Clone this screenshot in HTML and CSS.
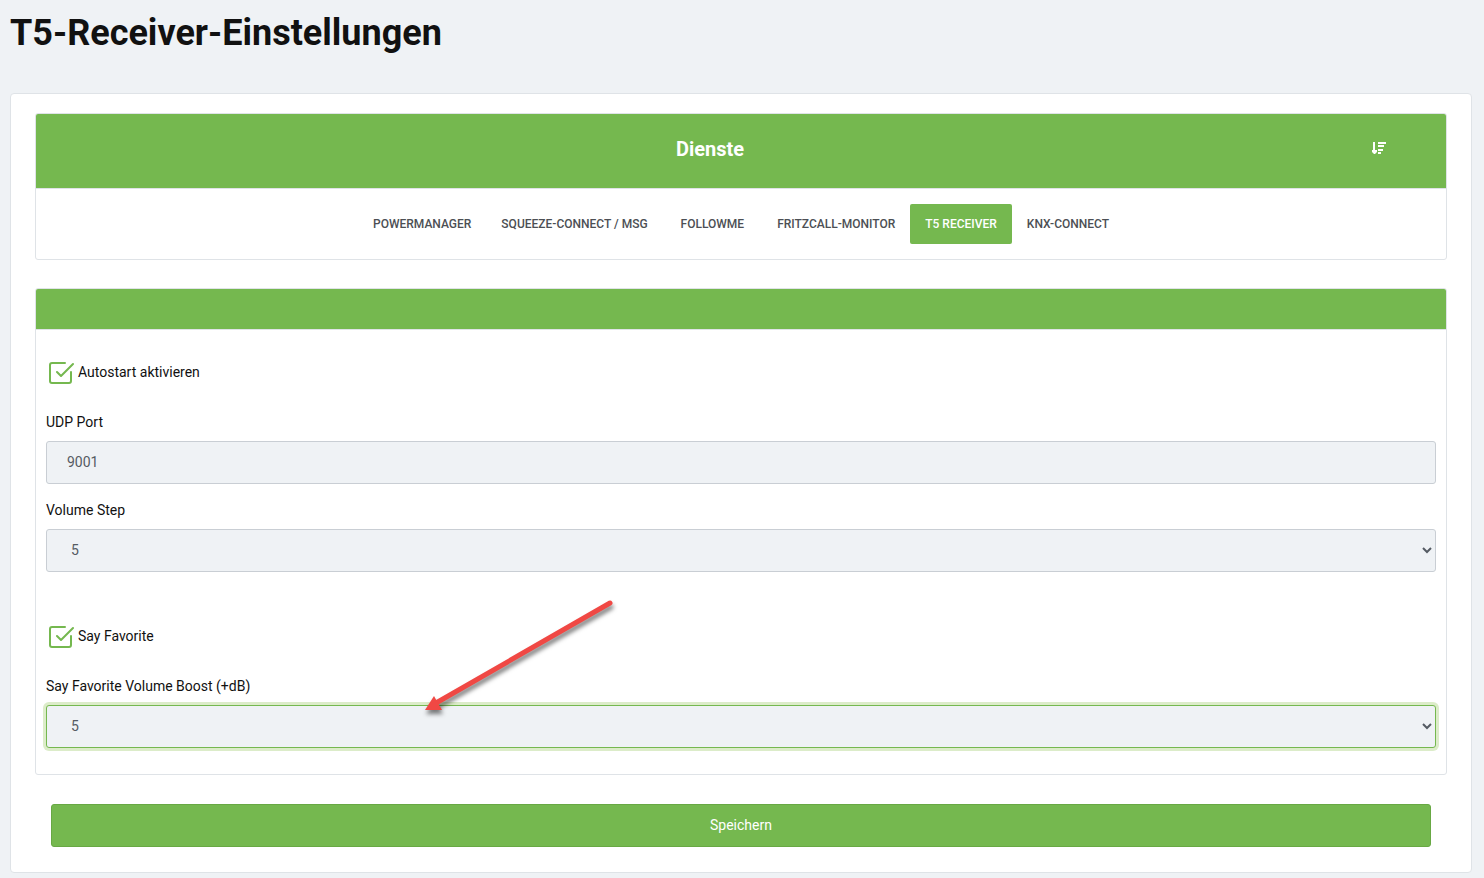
FILE: index.html
```html
<!DOCTYPE html>
<html lang="de">
<head>
  <meta charset="UTF-8" />
  <meta name="viewport" content="width=device-width, initial-scale=1.0" />
  <title>T5-Receiver-Einstellungen</title>
  <link rel="stylesheet" href="styles.css">
</head>
<body>
  <h1>T5-Receiver-Einstellungen</h1>

  <form class="panel" id="receiverForm">
    <section class="card">
      <div class="card-header services-header">
        <h2>Dienste</h2>
        <button type="button" class="sort-btn" aria-label="Sortieren">
          <svg width="16" height="14" viewBox="0 0 16 14" fill="currentColor">
            <path d="M2 1h2v8h2v2l-2 2H3L1 11V9h1z" />
            <path d="M7 1h8v2H7zM7 4h6v2H7zM7 8h5v2H7zM7 11h3v2H7z" />
          </svg>
        </button>
      </div>
      <nav class="tabs">
        <a href="#powermanager">Powermanager</a>
        <a href="#squeeze">Squeeze-Connect / MSG</a>
        <a href="#followme" class="spaced">FollowMe</a>
        <a href="#fritzcall" class="spaced">FritzCall-Monitor</a>
        <a href="#t5" class="active">T5 Receiver</a>
        <a href="#knx">KNX-Connect</a>
      </nav>
    </section>

    <section class="card">
      <div class="card-header"></div>
      <div class="card-body">
        <label class="check-row">
          <span class="check">
            <input type="checkbox" name="autostart" checked />
            <svg width="26" height="26" viewBox="0 0 26 26">
              <path d="M17 3H4a2 2 0 0 0-2 2v16a2 2 0 0 0 2 2h17a2 2 0 0 0 2-2v-9" />
              <path d="M9 12l4 4L25 4" />
            </svg>
          </span>
          Autostart aktivieren
        </label>
        <div class="form-group">
          <label for="udpPort">UDP Port</label>
          <input type="text" id="udpPort" name="udpPort" value="9001" />
        </div>
        <div class="form-group">
          <label for="volumeStep">Volume Step</label>
          <select id="volumeStep" name="volumeStep">
            <option>5</option>
          </select>
        </div>
        <label class="check-row second">
          <span class="check">
            <input type="checkbox" name="sayFavorite" checked />
            <svg width="26" height="26" viewBox="0 0 26 26">
              <path d="M17 3H4a2 2 0 0 0-2 2v16a2 2 0 0 0 2 2h17a2 2 0 0 0 2-2v-9" />
              <path d="M9 12l4 4L25 4" />
            </svg>
          </span>
          Say Favorite
        </label>
        <div class="form-group">
          <label for="volumeBoost">Say Favorite Volume Boost (+dB)</label>
          <select id="volumeBoost" name="volumeBoost" class="focused">
            <option>5</option>
          </select>
          <svg class="arrow" width="200" height="130" viewBox="0 0 200 130">
            <path d="M190 13L16 113" stroke="#f04844" stroke-width="5" stroke-linecap="round" />
            <path d="M5 120L14 106L22 120z" fill="#f04844" />
          </svg>
        </div>
      </div>
    </section>

    <button type="submit" class="save-btn">Speichern</button>
  </form>
</body>
</html>
```
FILE: styles.css
```css
* {
  box-sizing: border-box;
}

body {
  font-family: Roboto, sans-serif;
  font-size: 14px;
  line-height: 20px;
  margin: 0;
  padding: 10px 12px 5px 10px;
  background-color: #eff2f5;
  color: #111;
}

h1 {
  margin: 0 0 37px;
  font-size: 36px;
  line-height: 46px;
  font-weight: 700;
}

.panel {
  padding: 19px 24px 25px;
  background: white;
  border: 1px solid #dfe3e7;
  border-radius: 4px;
}

.card {
  margin-bottom: 28px;
  border: 1px solid #dfe3e7;
  border-radius: 3px;
}

.card-header {
  min-height: 40px;
  background-color: #75b84f;
  border-radius: 2px 2px 0 0;
}

.services-header {
  display: flex;
  align-items: center;
  padding: 0 15px;
  height: 74px;
  color: white;
}

.services-header h2 {
  flex: 1;
  margin: 0;
  padding-bottom: 4px;
  text-align: center;
  font-size: 20px;
  line-height: 24px;
  font-weight: 700;
}

.sort-btn {
  display: flex;
  width: 62px;
  padding: 0 2px 6px;
  border: none;
  background: none;
  color: white;
  cursor: pointer;
}

.tabs {
  display: flex;
  flex-wrap: wrap;
  justify-content: center;
  padding: 15px;
  border-top: 1px solid #dfe3e7;
}

.tabs a {
  padding: 10px 15px;
  border-radius: 2px;
  color: #4c4f54;
  font-size: 12px;
  font-weight: 500;
  text-decoration: none;
  text-transform: uppercase;
}

.tabs .spaced {
  margin-left: 3px;
}

.tabs .active {
  background-color: #75b84f;
  color: white;
}

.card-body {
  padding: 30px 10px 26px;
  border-top: 1px solid #dfe3e7;
}

.check-row {
  display: flex;
  gap: 4px;
  height: 26px;
  margin-bottom: 26px;
  padding-left: 2px;
  line-height: 24px;
}

.check-row.second {
  margin-top: 52px;
}

.check {
  display: grid;
}

.check input,
.check svg {
  grid-area: 1 / 1;
}

.check input {
  width: 26px;
  height: 26px;
  margin: 0;
  opacity: 0;
}

.check svg {
  pointer-events: none;
  fill: none;
  stroke: #75b84f;
  stroke-width: 2;
  stroke-linecap: round;
  stroke-linejoin: round;
}

.check input:not(:checked) + svg path:last-child {
  display: none;
}

.form-group {
  position: relative;
}

.form-group + .form-group {
  margin-top: 16px;
}

.form-group label {
  display: block;
  margin-bottom: 9px;
}

.form-group input,
.form-group select {
  display: block;
  width: 100%;
  height: 43px;
  padding: 0 20px 2px;
  border: 1px solid #c9ced4;
  border-radius: 3px;
  background-color: #eff2f5;
  color: #555b63;
  font: inherit;
}

.form-group select:focus,
.form-group select.focused {
  outline: none;
  border-color: #75b84f;
  box-shadow: 0 0 0 3px #dcecc9;
}

/* pointer lying over the boost setting */
.arrow {
  position: absolute;
  left: 374px;
  bottom: 28px;
  fill: none;
  filter: drop-shadow(1px 4px 2px rgba(0, 0, 0, 0.5));
  pointer-events: none;
}

.save-btn {
  display: block;
  width: calc(100% - 32px);
  height: 43px;
  margin: 29px auto 0;
  padding: 0 20px 2px;
  border: 1px solid #68a844;
  border-radius: 3px;
  background-color: #75b84f;
  color: white;
  font: inherit;
  cursor: pointer;
}

.save-btn:hover {
  background-color: #68a844;
}
```
